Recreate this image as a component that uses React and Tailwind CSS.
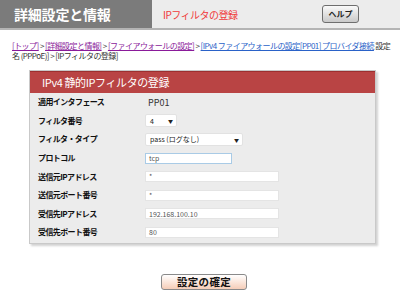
import React from 'react';

const jp = { fontFamily: '"Noto Sans CJK JP", "Noto Sans", sans-serif' };

const rows = [
  { label: '適用インタフェース', kind: 'text', value: 'PP01' },
  { label: 'フィルタ番号', kind: 'select', value: '4', w: 'w-[32px]' },
  { label: 'フィルタ・タイプ', kind: 'select', value: 'pass (ログなし)', w: 'w-[98px]' },
  { label: 'プロトコル', kind: 'input', value: 'tcp', w: 'w-[87px]', focus: true },
  { label: '送信元IPアドレス', kind: 'input', value: '*', w: 'w-[134px]' },
  { label: '送信元ポート番号', kind: 'input', value: '*', w: 'w-[134px]' },
  { label: '受信先IPアドレス', kind: 'input', value: '192.168.100.10', w: 'w-[134px]' },
  { label: '受信先ポート番号', kind: 'input', value: '80', w: 'w-[134px]' },
];

function Field({ row }) {
  if (row.kind === 'text') {
    return <span className="text-[9px] text-[#333] pl-[3px]">{row.value}</span>;
  }
  if (row.kind === 'select') {
    return (
      <div className={`${row.w} h-[13px] bg-white border border-[#e2e2e2] rounded-[2px] flex items-center justify-between pl-[4px] pr-[3px]`}>
        <span className="text-[7px] text-[#222]">{row.value}</span>
        <span className="text-[5px] text-[#222]">▼</span>
      </div>
    );
  }
  return (
    <div
      className={`${row.w} h-[11px] bg-white border ${row.focus ? 'border-[#a9cbe6]' : 'border-[#e4e4e4]'} flex items-center pl-[3px]`}
    >
      <span className="text-[7px] text-[#555]">{row.value}</span>
    </div>
  );
}

export default function App() {
  return (
    <div className="w-[400px] h-[299px] bg-white overflow-hidden" style={jp}>
      {/* header */}
      <div className="flex h-[30px] border-b-2 border-[#b4b4b4]">
        <div className="w-[152px] bg-[#7b7b7b] flex items-center pl-[14px]">
          <span className="text-white font-bold text-[14px] tracking-[-0.2px]">詳細設定と情報</span>
        </div>
        <div className="flex-1 bg-[#ececec] flex items-center pl-[11px] pr-[41px] justify-between">
          <span className="text-[#f03a3a] text-[10px] tracking-[-0.5px]">IPフィルタの登録</span>
          <button className="w-[37px] h-[18px] rounded-[3px] border border-[#6e6e6e] bg-gradient-to-b from-[#fafafa] to-[#c9c9c9] text-[8px] font-bold text-[#222] flex items-center justify-center">
            ヘルプ
          </button>
        </div>
      </div>

      {/* breadcrumb */}
      <div className="pl-[12px] pt-[11px] text-[8px] leading-[10px] text-[#333] tracking-[-0.55px]">
        <div className="whitespace-nowrap">
          <span className="text-[#8a1a9a] underline">[トップ]</span> &gt;{' '}
          <span className="text-[#8a1a9a] underline">[詳細設定と情報]</span> &gt;{' '}
          <span className="text-[#8a1a9a] underline">[ファイアウォールの設定]</span> &gt;{' '}
          <span className="text-[#2a62c8] underline">[IPv4 ファイアウォールの設定[PP01] プロバイダ接続</span> 設定
        </div>
        <div className="whitespace-nowrap">名 (PPPoE)] &gt; [IPフィルタの登録]</div>
      </div>

      {/* panel */}
      <div className="ml-[29px] mt-[9px] w-[347px] bg-[#ececec] border border-[#c9c9c9] shadow-[2px_2px_2px_rgba(0,0,0,0.18)]">
        <div className="h-[22px] bg-[#b94444] border-t border-[#9c3030] flex items-center pl-[12px]">
          <span className="text-white text-[11px] tracking-[-0.4px]">IPv4 静的IPフィルタの登録</span>
        </div>
        <div className="pb-[1px]">
          {rows.map((row) => (
            <div key={row.label} className="h-[18.6px] flex items-center">
              <div className="w-[115px] pl-[8px] text-[8px] font-bold text-[#111] tracking-[-0.6px]">{row.label}</div>
              <Field row={row} />
            </div>
          ))}
        </div>
      </div>

      {/* confirm */}
      <div className="flex justify-center pt-[30px]">
        <button className="ml-[8px] w-[86px] h-[16px] rounded-[3px] border border-[#8a8a8a] bg-gradient-to-b from-white to-[#f5cdb8] text-[10.5px] font-bold text-[#111] flex items-center justify-center tracking-[0.3px]">
          設定の確定
        </button>
      </div>
    </div>
  );
}
